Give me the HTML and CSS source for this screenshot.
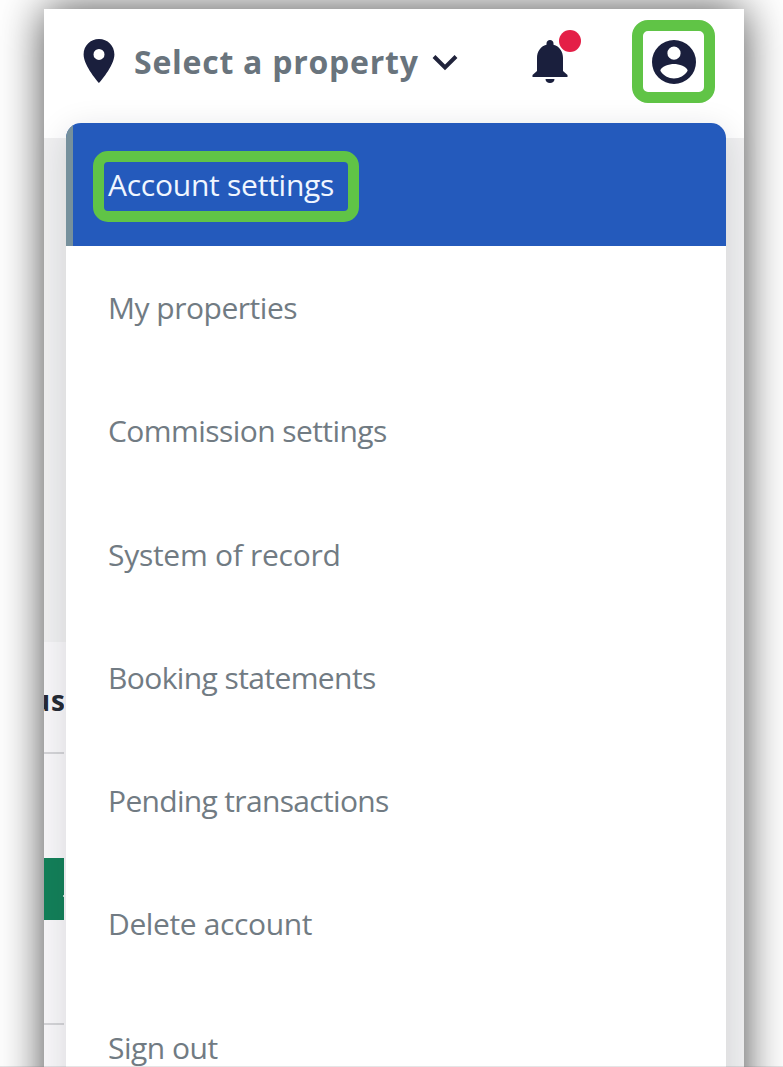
FILE: index.html
```html
<!DOCTYPE html>
<html lang="en">
<head>
<meta charset="utf-8">
<title>Account menu</title>
<link rel="stylesheet" href="styles.css">
</head>
<body>
<main class="panel">
  <header class="topbar">
    <svg class="pin" viewBox="5 2 14 20"><path fill-rule="evenodd" d="M12 2C8.1 2 5 5.1 5 9c0 5.200 7 13 7 13s7-7.800 7-13c0-3.900-3.100-7-7-7zm0 9.500a2.500 2.500 0 1 1 0-5 2.500 2.500 0 0 1 0 5z"/></svg>
    <span class="property">Select a property</span>
    <svg class="chevron" viewBox="0 0 26 17"><path d="M2 2.500 13 13.500 24 2.500"/></svg>
    <div class="alerts">
      <svg class="bell" viewBox="0 0 36 44"><path d="M18 0c2 0 3.500 1.500 3.500 3.500v1.200C27.600 6.300 31 11.700 31 18v13l4.500 4V37H.5v-2l4.500-4V18C5 11.700 8.400 6.300 14.500 4.700V3.500C14.500 1.500 16 0 18 0zM13.500 39h9c0 2.600-2 4-4.500 4s-4.500-1.400-4.500-4z"/></svg>
      <i class="dot"></i>
    </div>
    <div class="profile">
      <svg class="person" viewBox="2 2 20 20"><path fill-rule="evenodd" d="M12 2a10 10 0 1 0 0 20 10 10 0 0 0 0-20zm0 3a3 3 0 1 1 0 6 3 3 0 0 1 0-6zm0 14.500c-2.500 0-4.900-1.300-6.200-3.500.1-2 4.100-3.100 6.200-3.100s6.100 1.100 6.200 3.100c-1.300 2.200-3.700 3.500-6.200 3.500z"/></svg>
    </div>
  </header>
  <section class="content">
    <div class="backdrop"></div>
    <div class="column">
      <div class="heading"><span>us</span></div>
      <div class="cell"><div class="badge"><i></i></div></div>
      <div class="cell last"></div>
    </div>
  </section>
  <nav class="menu">
    <a class="item active"><span class="marked">Account settings</span></a>
    <a class="item properties">My properties</a>
    <a class="item commission">Commission settings</a>
    <a class="item system">System of record</a>
    <a class="item booking">Booking statements</a>
    <a class="item pending">Pending transactions</a>
    <a class="item delete">Delete account</a>
    <a class="item signout">Sign out</a>
  </nav>
</main>
<div class="edge"></div>
</body>
</html>
```
FILE: styles.css
```css
* { box-sizing: border-box; }
html, body { margin: 0; height: 1067px; overflow: hidden; background: #fff; }
body { position: relative; font-family: "Open Sans", "Noto Sans", sans-serif; }
.panel {
  position: relative;
  width: 700px;
  height: 1150px;
  margin: 9px 0 0 44px;
  background: #fff;
  box-shadow: 0 0 42px rgba(0, 0, 0, .7);
}
.topbar {
  display: flex;
  align-items: flex-start;
  height: 129px;
  background: #fff;
  fill: #1a1f3d;
}
.pin { width: 32px; height: 44px; margin: 30px 0 0 39px; }
.property {
  width: 285px;
  margin: 31px 0 0 19px;
  font-size: 32px;
  line-height: 44px;
  font-weight: 700;
  letter-spacing: .75px;
  color: #69747d;
  white-space: nowrap;
}
.chevron { width: 26px; height: 17px; margin: 45px 0 0 13px; fill: none; stroke: #20233b; stroke-width: 4; }
.alerts { position: relative; width: 36px; height: 44px; margin: 31px 0 0 74px; }
.bell { display: block; width: 36px; height: 44px; }
.dot { position: absolute; left: 27px; top: -10px; width: 22px; height: 22px; border-radius: 50%; background: #e41f47; }
.profile {
  display: flex;
  align-items: center;
  justify-content: center;
  width: 83px;
  height: 83px;
  margin: 11px 0 0 64px;
  border: 11px solid #60c446;
  border-radius: 16px;
}
.person { width: 44px; height: 44px; }
.content { height: 1021px; background: #f0f0f1; }
.backdrop { height: 504px; }
.column { width: 22px; padding-right: 2px; background: #f8f7f9; }
.heading {
  display: flex;
  align-items: center;
  justify-content: flex-end;
  height: 112px;
  padding-top: 5px;
  border-bottom: 2px solid #d4d4d7;
  overflow: hidden;
  font-size: 28px;
  font-weight: 700;
  letter-spacing: 1px;
  color: #252a34;
}
.heading span { margin-right: -2px; }
.cell { height: 271px; padding-top: 104px; border-bottom: 2px solid #d4d4d7; }
.badge { display: flex; justify-content: flex-end; height: 62px; padding-top: 37px; background: #138059; }
.badge i { width: 1px; height: 2px; background: #b5dccd; }
.last { height: 134px; border: 0; }
.menu {
  position: absolute;
  left: 22px;
  top: 114px;
  width: 660px;
  height: 1040px;
  overflow: hidden;
  border-radius: 15px 15px 0 0;
  background: #fff;
  box-shadow: 0 8px 34px rgba(20, 25, 45, .14);
}
.item {
  display: flex;
  align-items: center;
  height: 123.3px;
  padding: 0 0 0 42px;
  font-size: 30px;
  line-height: 40px;
  color: #717b83;
  white-space: nowrap;
}
.active { padding: 4px 0 0 20px; border-left: 7px solid #76909c; background: #245abc; color: #f0f6ff; letter-spacing: -.25px; }
.marked {
  display: flex;
  align-items: center;
  width: 266px;
  height: 71px;
  padding: 0 0 4px 4px;
  border: 11px solid #60c446;
  border-radius: 15px;
}
.properties { letter-spacing: -.48px; }
.commission { letter-spacing: -.57px; }
.system { letter-spacing: -.28px; }
.booking { letter-spacing: -.6px; }
.pending { letter-spacing: -.67px; }
.delete { letter-spacing: -.38px; }
.signout { letter-spacing: -.5px; }
.edge { position: absolute; left: 0; right: 0; bottom: 0; height: 1px; background: rgba(110, 110, 115, .18); }
```
